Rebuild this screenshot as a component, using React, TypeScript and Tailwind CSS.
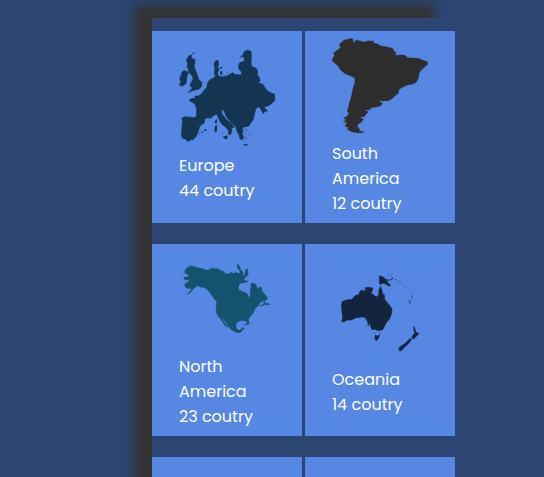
import type { ReactNode } from "react";

type Continent = {
  name: string[];
  count: string;
  viewBox: string;
  color: string;
  gap: string;
  map: ReactNode;
};

const continents: Continent[] = [
  {
    name: ["Europe"],
    count: "44 coutry",
    viewBox: "27 33 288 288",
    color: "text-[#143552]",
    gap: "mb-[6px]",
    map: (
      <>
        <g stroke="currentColor" strokeWidth="2">
          <polygon points="134,66 141,60 145,64 146,74 143,82 147,90 143,97 143,106 150,110 160,110 170,108 181,102 188,98 194,103 207,105 216,103 214,95 207,88 206,77 209,68 218,65 224,63 222,55 218,50 220,42 222,35 232,31 243,34 244,50 243,72 246,80 257,84 262,90 262,105 268,112 270,122 265,130 278,132 284,142 290,151 302,158 314,163 314,182 306,190 295,197 283,200 286,208 293,212 284,215 280,221 275,212 270,203 263,200 257,208 253,222 250,237 243,248 236,258 224,260 216,264 219,275 216,282 221,290 217,300 210,296 207,284 200,272 198,262 185,250 170,232 162,212 155,208 156,222 166,235 174,243 184,251 192,262 184,263 186,273 181,284 175,282 176,272 168,262 155,252 148,240 143,228 139,222 130,228 122,235 112,233 104,238 103,248 92,256 88,262 84,275 80,287 71,298 60,300 54,305 48,298 37,294 34,285 36,260 38,245 35,235 44,230 60,232 76,233 80,225 80,208 77,197 72,189 60,184 59,178 70,175 75,176 75,168 85,168 94,162 101,152 110,143 113,128 120,119 130,115 136,108 133,98 135,85 132,75" />
          <polygon points="56,48 65,45 64,55 74,58 75,68 72,80 76,90 82,105 87,120 95,126 95,138 88,147 75,150 62,154 54,158 62,150 67,144 61,138 63,128 69,120 68,110 62,103 60,98 54,100 56,88 51,82 53,70 50,62" />
          <polygon points="33,108 36,96 42,92 51,94 53,103 50,112 49,128 43,135 34,138 28,134 33,125 29,118 31,110" />
        </g>
        <polygon points="137,239 141,237 141,247 138,252 134,247" />
        <polygon points="135,257 141,256 141,272 136,279 133,270" />
        <polygon points="158,290 173,286 172,297 166,298" />
        <path d="M220 312l6 0 9 2-3 3-9-1zM150 96l6-4 1 12-5 2zM148 85l6-5 3 3-5 5zM170 93l4 4-3 2zM211 51l4-6 3 2-4 6zM67 43l3-6 3-1-2 7zM48 60l3-7 3 0-4 8zM93 279l4-6 2 1-3 5zM101 270l6-3 4 3-5 3zM86 279h3v3h-3z" />
        <path d="M218 262l7 2m-2 5l9 4m-9 5l6 6m-1 6l3 6m6-17l3 7m-18 4l8 10m8-16l5 5m-2 6l3 0m-16-28l5 2" fill="none" stroke="currentColor" strokeOpacity="0.65" strokeWidth="2" />
      </>
    ),
  },
  {
    name: ["South", "America"],
    count: "12 coutry",
    viewBox: "21 24 288 288",
    color: "text-[#2d2d2d]",
    gap: "mb-[7px]",
    map: (
      <>
        <polygon stroke="currentColor" points="43,44 50,36 58,30 68,28 80,25 85,29 84,37 89,37 93,30 103,32 115,36 130,33 145,33 146,39 158,42 168,48 185,50 203,55 206,62 211,66 214,72 207,76 222,76 225,74 240,76 248,83 262,84 280,85 295,91 307,95 308,103 299,111 288,121 283,128 281,142 274,157 262,163 248,165 235,170 223,178 220,190 210,198 200,207 190,212 175,213 158,211 168,216 172,221 168,227 155,231 138,233 136,239 119,240 131,246 124,251 118,260 104,261 115,268 110,276 100,282 96,290 102,294 104,302 118,307 100,309 82,306 66,298 72,294 66,290 60,286 66,280 60,274 62,270 58,263 68,258 72,247 66,246 70,234 72,222 78,205 81,190 84,175 89,160 90,145 78,138 60,131 47,120 37,106 22,93 22,86 29,76 25,70 37,60 47,53" />
        <path d="M55 265h6M56 272h4M55 278h6M60 290h6M78 303h10M121 237l5-2M127 31h4M68 244l3 1" stroke="currentColor" strokeWidth="2" />
      </>
    ),
  },
  {
    name: ["North", "America"],
    count: "23 coutry",
    viewBox: "12 -12 288 288",
    color: "text-[#12546e]",
    gap: "mb-[7px]",
    map: (
      <>
        <polygon stroke="currentColor" strokeWidth="2" points="30,47 38,37 50,33 62,37 82,41 96,46 104,44 108,39 113,42 116,38 119,42 128,41 135,46 147,50 150,56 162,57 167,52 175,56 185,52 190,56 197,52 193,46 186,36 188,28 193,32 196,43 204,52 202,62 210,60 212,44 218,42 219,60 211,66 206,74 212,78 220,78 212,82 198,84 190,92 190,104 198,108 212,113 219,120 222,131 227,122 226,108 228,98 228,86 238,85 244,92 248,103 254,96 260,98 260,106 268,117 276,126 276,134 262,138 254,144 250,152 240,160 236,172 226,184 220,192 222,206 218,210 214,198 203,196 190,199 183,206 183,220 190,226 198,224 202,218 208,220 202,226 195,233 182,231 168,223 160,214 152,200 143,190 138,186 145,198 158,216 150,212 138,193 130,183 124,172 124,150 126,140 118,132 110,120 102,108 90,98 75,95 68,92 58,98 48,110 37,118 49,104 48,98 38,101 30,94 30,86 42,80 43,75 27,73 27,67 42,65 42,60 30,54" />
        <path d="M264 151l4-10 3 2-3 5 5-3 5 0 6 3-5 1-7-1zM266 139l4-3-1 4zM206 209l10-1zM255 152l8-3 1 2-6 3z" stroke="currentColor" strokeWidth="1.5" />
      </>
    ),
  },
  {
    name: ["Oceania"],
    count: "14 coutry",
    viewBox: "6 -4 288 288",
    color: "text-[#14243f]",
    gap: "mb-[7px]",
    map: (
      <>
        <g stroke="currentColor" strokeWidth="1.5">
          <polygon points="36,109 48,104 66,102 74,92 82,88 86,90 90,77 98,74 103,80 107,67 115,66 128,68 127,76 123,83 132,90 141,95 146,88 147,73 152,63 156,76 158,85 163,88 164,102 172,112 180,121 186,131 185,145 178,162 169,172 163,184 158,193 145,196 134,192 126,193 122,184 119,172 115,178 112,168 108,160 104,156 94,155 76,158 64,164 50,165 42,170 35,168 38,158 36,140 34,122" />
          <polygon points="135,209 142,212 149,209 145,220 138,226 135,220" />
          <polygon points="148,31 160,35 168,42 172,50 182,61 176,62 165,55 158,53 154,57 148,56" />
          <polygon points="251,182 255,190 257,201 267,204 260,212 252,220 245,220 248,210 254,204 252,195" />
          <polygon points="240,219 244,224 236,234 225,244 214,256 207,256 208,246 224,235 234,226" />
        </g>
        <path d="M112 180h6M169 44l12 0 8-5" fill="none" stroke="currentColor" strokeWidth="3" />
        <path d="M104 66h3M106 70h3M182 33l7 5M193 40l8 5m4 2l8 5m4 2l5 4m4 4l2 4M171 30l4-3m6 0l3 2M243 81l5 3m-2 7l1 6m-5 2l4 4M232 104l9 8m-2-8l3 10m-5-1l4 2M134 201v5m14-4l2 5" fill="none" stroke="currentColor" strokeOpacity="0.7" strokeWidth="2.2" />
      </>
    ),
  },
];

function ContinentCard({ item }: { item: Continent }) {
  return (
    <article className="flex h-48 w-[150px] flex-col items-center justify-center bg-[#5687e2]">
      <div className="w-24">
        <svg viewBox={item.viewBox} className={`block size-24 overflow-visible ${item.gap} ${item.color}`} fill="currentColor">
          {item.map}
        </svg>
        <div className="text-base leading-[25px] whitespace-nowrap text-white">
          {item.name.map((line) => (
            <p key={line}>{line}</p>
          ))}
          <p>{item.count}</p>
        </div>
      </div>
    </article>
  );
}

export default function App() {
  return (
    <main className="h-[477px] overflow-hidden bg-[#2c4572] pt-[18px] pl-[152px] font-[Poppins,Inter,sans-serif]">
      <section className="h-[900px] w-[300px] bg-[#2c4572] pt-[13px] shadow-[-18px_-13px_10px_0_#333333]">
        <div className="grid w-[303px] grid-cols-[150px_150px] gap-x-[3px] gap-y-[21px]">
          {continents.map((item) => (
            <ContinentCard key={item.name.join(" ")} item={item} />
          ))}
          <div className="h-48 bg-[#5687e2]" />
          <div className="h-48 bg-[#5687e2]" />
        </div>
      </section>
    </main>
  );
}
